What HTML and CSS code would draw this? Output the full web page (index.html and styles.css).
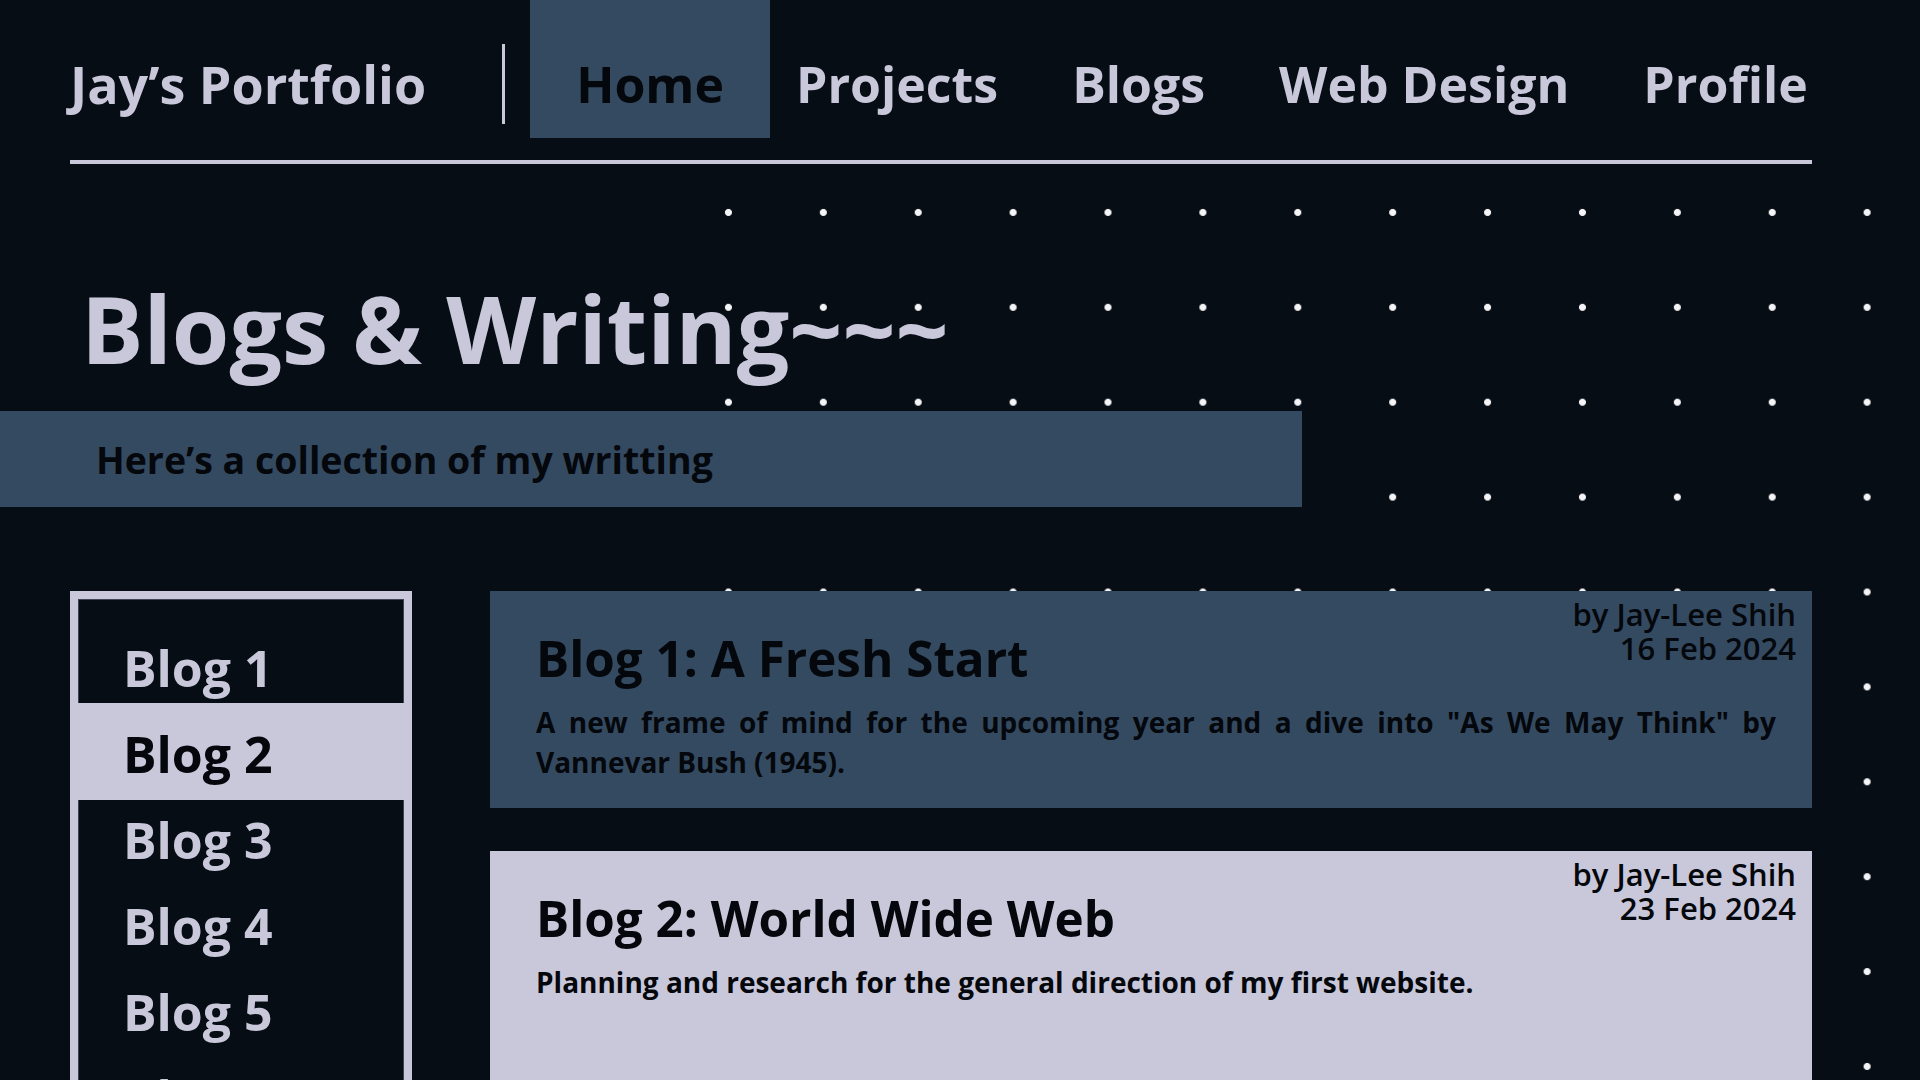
FILE: index.html
```html
<!DOCTYPE html>
<html lang="en">
<head>
<meta charset="utf-8">
<title>Jay’s Portfolio – Blogs</title>
<link rel="stylesheet" href="styles.css">
</head>
<body>
<div class="page">
  <div class="dots" aria-hidden="true"></div>
  <header class="nav">
    <div class="brand">Jay’s Portfolio</div>
    <span class="sep"></span>
    <nav class="links">
      <a class="link active">Home</a>
      <a class="link">Projects</a>
      <a class="link">Blogs</a>
      <a class="link">Web Design</a>
      <a class="link">Profile</a>
    </nav>
  </header>

  <h1 class="title">Blogs &amp; Writing~~~</h1>

  <div class="banner"><p>Here’s a collection of my writting</p></div>

  <main class="content">
    <aside class="sidebar">
      <ul class="blog-list">
        <li class="blog-item">Blog 1</li>
        <li class="blog-item active">Blog 2</li>
        <li class="blog-item">Blog 3</li>
        <li class="blog-item">Blog 4</li>
        <li class="blog-item">Blog 5</li>
        <li class="blog-item">Blog 6</li>
      </ul>
    </aside>

    <section class="posts">
      <article class="card card-dark">
        <div class="meta">by Jay-Lee Shih<br>16 Feb 2024</div>
        <h2 class="card-title">Blog 1: A Fresh Start</h2>
        <p class="card-text">A new frame of mind for the upcoming year and a dive into "As We May Think" by Vannevar Bush (1945).</p>
      </article>
      <article class="card card-light">
        <div class="meta">by Jay-Lee Shih<br>23 Feb 2024</div>
        <h2 class="card-title">Blog 2: World Wide Web</h2>
        <p class="card-text">Planning and research for the general direction of my first website.</p>
      </article>
    </section>
  </main>
</div>
</body>
</html>
```

FILE: styles.css
```css
* { box-sizing: border-box; }

html, body {
  margin: 0;
  padding: 0;
  background: #070d15;
}

body {
  font-family: "Open Sans", "Noto Sans", "DejaVu Sans", sans-serif;
  color: #c9c8da;
}

.page {
  position: relative;
  width: 1920px;
  height: 1080px;
  overflow: hidden;
  background: #070d15;
}

/* decorative dot grid */
.dots {
  position: absolute;
  left: 681px;
  top: 165px;
  right: 0;
  bottom: 0;
  z-index: 1;
  background-image: radial-gradient(circle at center, #f4f4f7 0, #f4f4f7 3.1px, rgba(244,244,247,0) 3.9px);
  background-size: 94.9px 94.9px;
  background-position: 0 0;
  pointer-events: none;
}

/* navigation */
.nav {
  display: flex;
  align-items: flex-start;
  height: 164px;
  margin: 0 108px 0 70px;
  border-bottom: 4px solid #c9c8da;
}

.brand,
.link {
  flex-shrink: 0;
  font-weight: 700;
  line-height: 70px;
  padding-top: 49px;
  white-space: nowrap;
}

.brand {
  font-size: 52px;
  color: #c9c8da;
}

.sep {
  flex-shrink: 0;
  display: block;
  width: 3px;
  height: 80px;
  margin: 44px 25px 0 76px;
  background: #c9c8da;
}

.links {
  display: flex;
  align-items: flex-start;
  flex-shrink: 0;
}

.link {
  display: block;
  height: 138px;
  padding-left: 37px;
  padding-right: 37px;
  font-size: 50px;
  color: #c9c8da;
  text-decoration: none;
}

.link.active {
  background: #344a61;
  color: #04070b;
  padding-left: 46px;
  padding-right: 46px;
  margin-right: -11px;
}

/* heading */
.title {
  margin: 106px 0 0 81px;
  font-weight: 700;
  font-size: 93px;
  line-height: 116px;
  color: #c9c8da;
  white-space: nowrap;
}

.banner {
  position: relative;
  z-index: 2;
  display: flex;
  align-items: center;
  width: 1302px;
  height: 96px;
  margin-top: 25px;
  padding-left: 96px;
  background: #344a61;
}

.banner p {
  margin: 0;
  font-weight: 700;
  font-size: 37.5px;
  color: #04070b;
  white-space: nowrap;
}

/* main */
.content {
  position: relative;
  z-index: 2;
  display: flex;
  align-items: flex-start;
  gap: 78px;
  margin: 84px 0 0 70px;
}

.sidebar {
  flex-shrink: 0;
  width: 342px;
  height: 620px;
  border: 8px solid #c9c8da;
  padding-top: 26px;
  background: #070d15;
  box-shadow: inset 0 0 0 1px #3e4454;
}

.blog-list {
  list-style: none;
  margin: 0;
  padding: 0;
}

.blog-item {
  height: 86px;
  padding-left: 45px;
  font-weight: 700;
  font-size: 50px;
  line-height: 86px;
  color: #c9c8da;
  white-space: nowrap;
}

.blog-item.active {
  position: relative;
  background: #c9c8da;
  color: #04070b;
  box-shadow: 0 -8px 0 #c9c8da, 0 3px 0 #c9c8da, -8px 0 0 #c9c8da, 8px 0 0 #c9c8da;
}

.posts {
  flex-shrink: 0;
  display: flex;
  flex-direction: column;
  gap: 43px;
  width: 1322px;
}

.card {
  padding: 7px 16px 26px 46px;
  color: #04070b;
}

.card-dark { background: #344a61; }
.card-light { background: #c9c8da; min-height: 320px; }

.meta {
  float: right;
  margin: -1px 0 0 20px;
  text-align: right;
  font-weight: 600;
  font-size: 31px;
  line-height: 34px;
}

.card-title {
  display: flow-root;
  margin: 30px 0 0;
  font-weight: 700;
  font-size: 49.4px;
  line-height: 60px;
  white-space: nowrap;
}

.card-text {
  clear: both;
  margin: 14px 20px 0 0;
  font-weight: 700;
  font-size: 28px;
  line-height: 40px;
  text-align: justify;
}
```
